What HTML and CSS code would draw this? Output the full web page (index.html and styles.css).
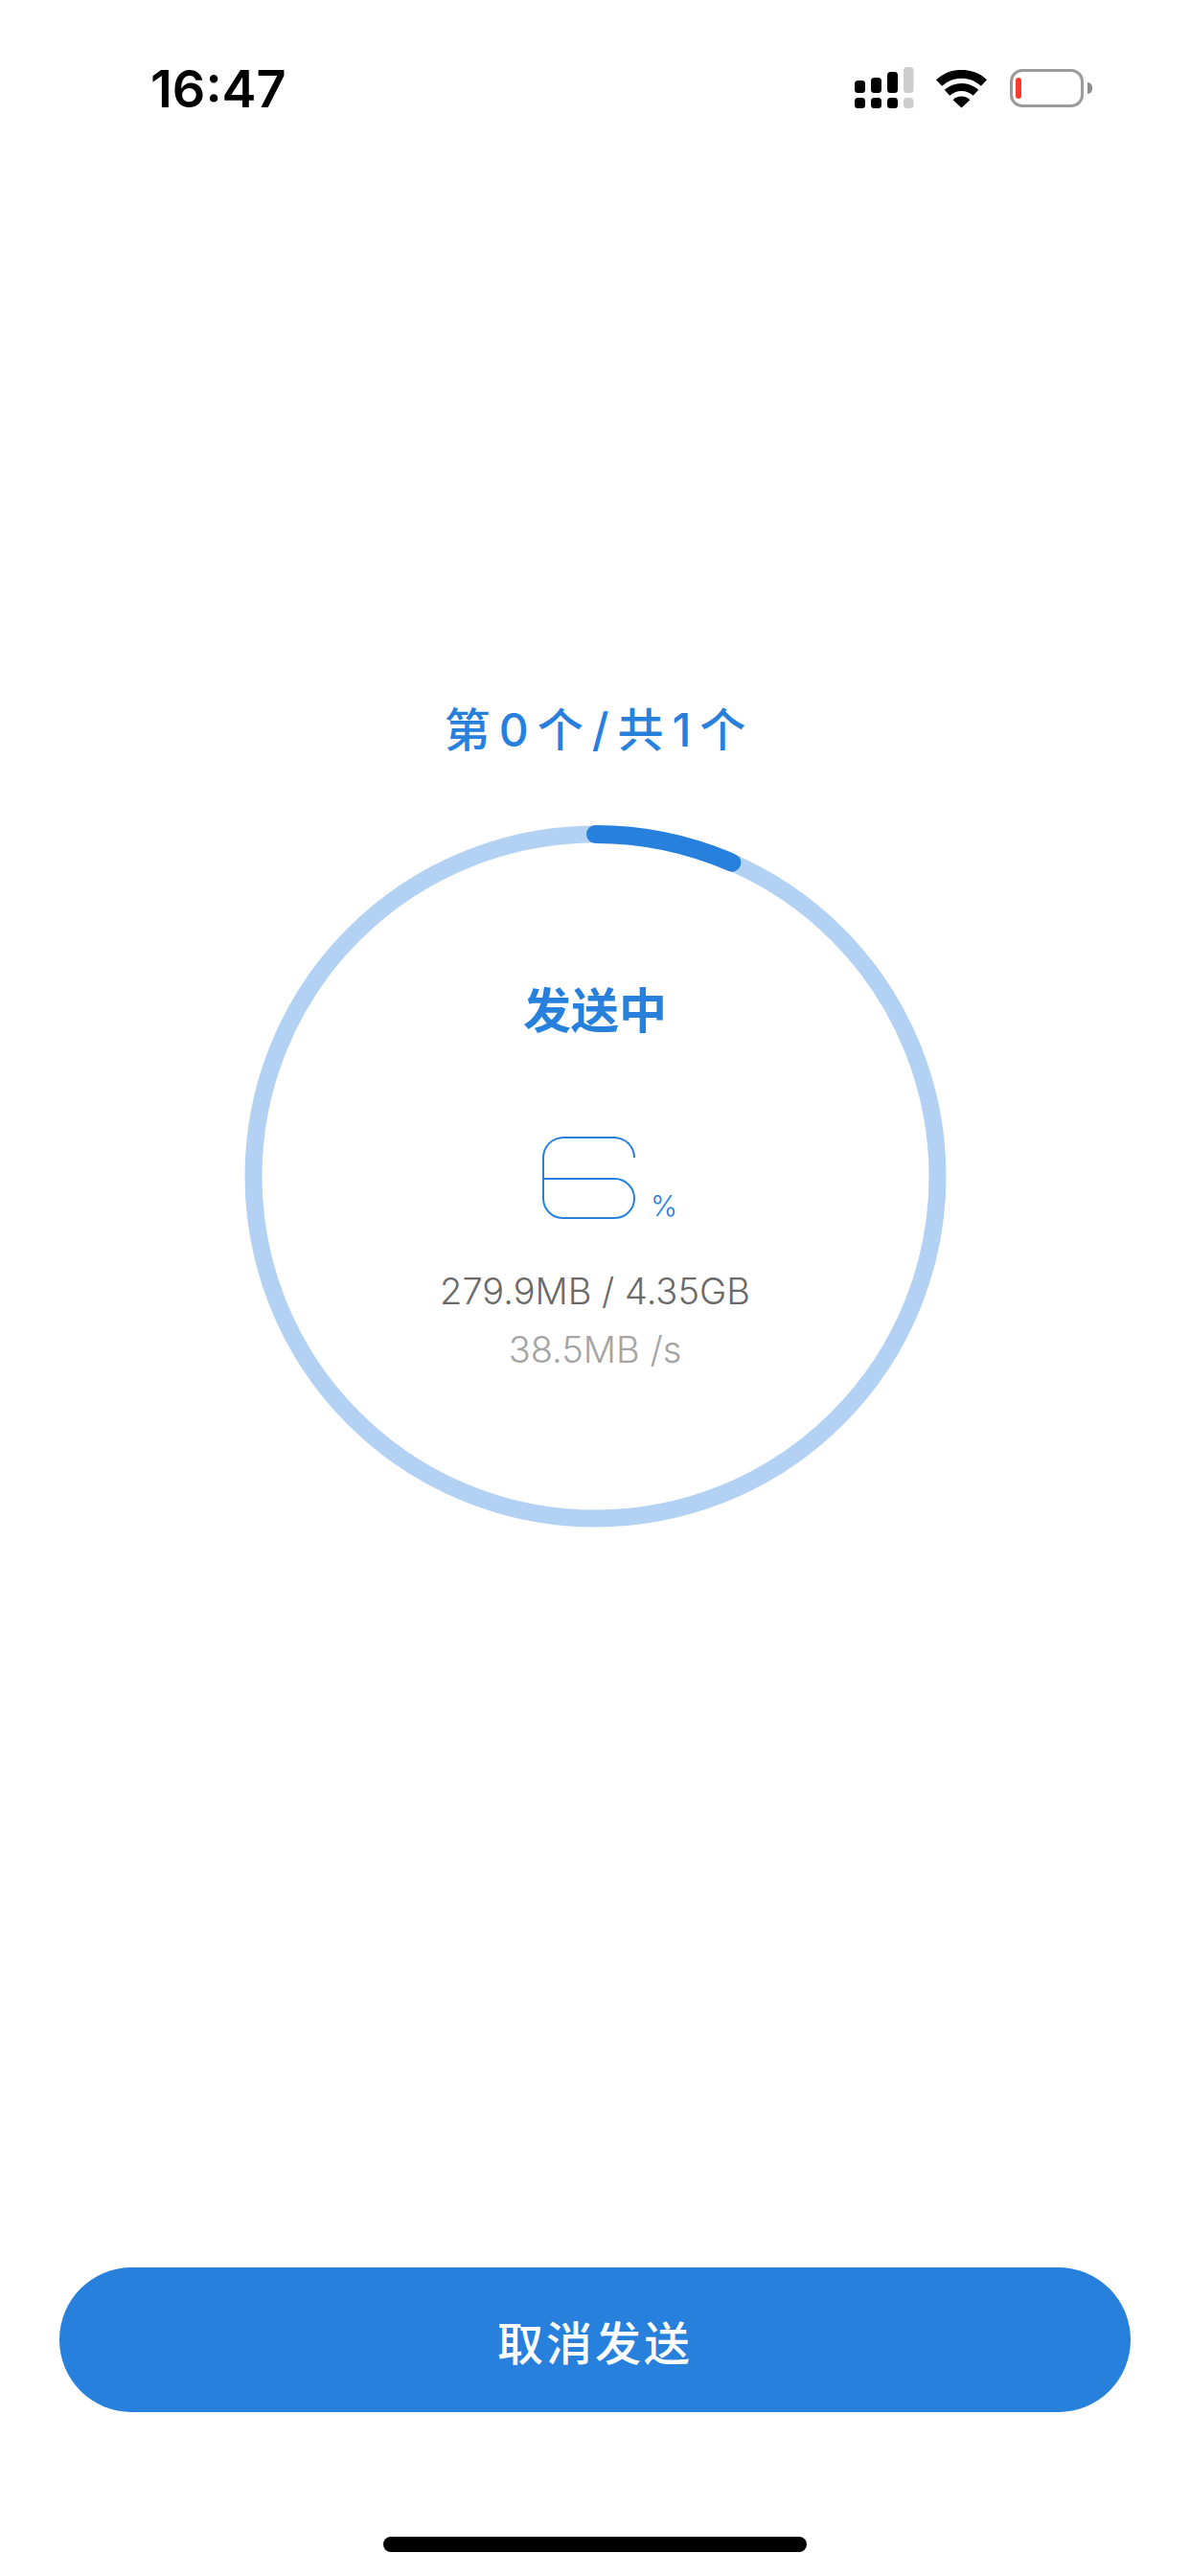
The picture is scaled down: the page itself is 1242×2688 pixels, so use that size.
FILE: index.html
```html
<!DOCTYPE html>
<html lang="zh-CN">
<head>
<meta charset="utf-8">
<title>发送中</title>
<link rel="stylesheet" href="styles.css">
</head>
<body>
<div class="screen">
  <header class="status">
    <span class="clock">16:47</span>
    <div class="status-icons">
      <svg class="signal" width="62" height="44" viewBox="0 0 62 44">
        <g fill="#000">
          <rect x="0" y="14" width="11" height="13" rx="3.5"/>
          <rect x="17" y="11" width="11" height="16" rx="3.5"/>
          <rect x="34" y="5" width="11" height="22" rx="3.5"/>
          <rect x="0" y="32" width="11" height="11" rx="3.5"/>
          <rect x="17" y="32" width="11" height="11" rx="3.5"/>
          <rect x="34" y="32" width="11" height="11" rx="3.5"/>
        </g>
        <g fill="#cdcdcd">
          <rect x="51" y="0" width="10.500" height="27" rx="3.500"/>
          <rect x="51" y="32" width="10.500" height="11" rx="3.500"/>
        </g>
      </svg>
      <svg class="wifi" width="53" height="40" viewBox="0 0 53 40">
        <g fill="none" stroke="#000">
          <path stroke-width="9" d="M3.100 13.500A34.500 34.500 0 0 1 49.900 13.500"/>
          <path stroke-width="8" d="M11.500 23.800A22 22 0 0 1 41.500 23.800"/>
        </g>
        <path fill="#000" d="M26.500 39.500L17.600 31.200A12.500 12.500 0 0 1 35.400 31.200Z"/>
      </svg>
      <div class="battery">
        <div class="battery-case"><span class="battery-level"></span></div>
        <span class="battery-nub"></span>
      </div>
    </div>
  </header>

  <main class="transfer">
    <h1 class="count">第0个/共1个</h1>
    <section class="ring">
      <svg class="ring-art" width="733" height="733" viewBox="0 0 733 733">
        <circle cx="366.500" cy="366.500" r="357" fill="none" stroke="#b3d2f3" stroke-width="18"/>
        <path d="M366.500 9.500A357 357 0 0 1 508.800 39.100" fill="none" stroke="#2780dc" stroke-width="19" stroke-linecap="round"/>
      </svg>
      <h2 class="state">发送中</h2>
      <div class="percent">
        <div class="numeral" role="img" aria-label="6">
          <span class="numeral-cap"></span>
          <span class="numeral-stem"></span>
          <span class="numeral-bowl"></span>
        </div>
        <span class="percent-sign">%</span>
      </div>
      <p class="sizes">279.9MB / 4.35GB</p>
      <p class="speed">38.5MB /s</p>
    </section>
  </main>

  <footer class="actions">
    <button class="cancel" type="button">取消发送</button>
    <span class="home-bar"></span>
  </footer>
</div>
</body>
</html>
```

FILE: styles.css
```css
* {
  box-sizing: border-box;
}

html,
body {
  margin: 0;
  padding: 0;
  background: #fff;
}

body {
  font-family: Inter, "Noto Sans CJK SC", sans-serif;
}

h1,
h2,
p {
  margin: 0;
  font-weight: 400;
}

.screen {
  width: 1242px;
  height: 2688px;
  display: flex;
  flex-direction: column;
  overflow: hidden;
}

/* status bar */
.status {
  height: 140px;
  padding: 71px 102px 0 157px;
  display: flex;
  justify-content: space-between;
  align-items: flex-start;
}

.clock {
  font-size: 54px;
  line-height: 44px;
  font-weight: 600;
  color: #000;
}

.status-icons {
  display: flex;
  align-items: flex-start;
  width: 248px;
  margin-top: -1px;
}

.signal {
  margin-right: 23px;
}

.wifi {
  margin: 3px 24px 0 0;
}

.battery {
  display: flex;
  align-items: center;
  margin-top: 2px;
}

.battery-case {
  width: 77px;
  height: 40px;
  border: 3px solid #9b9b9b;
  border-radius: 13px;
  padding: 6px 3px;
}

.battery-level {
  display: block;
  width: 6px;
  height: 22px;
  border-radius: 3px;
  background: #ff3b30;
}

.battery-nub {
  width: 5px;
  height: 12px;
  margin-left: 4px;
  border-radius: 0 6px 6px 0;
  background: #8e8e8e;
}

/* progress block */
.transfer {
  display: flex;
  flex-direction: column;
  align-items: center;
  padding-top: 592px;
  flex: 1;
}

.count {
  font-size: 48px;
  line-height: 60px;
  font-weight: 500;
  letter-spacing: 9px;
  margin-right: -9px;
  color: #2780dc;
  white-space: nowrap;
}

.ring {
  position: relative;
  width: 733px;
  height: 733px;
  margin-top: 69px;
  padding-top: 164px;
  display: flex;
  flex-direction: column;
  align-items: center;
}

.ring-art {
  position: absolute;
  left: 0;
  top: 0;
}

.state {
  position: relative;
  font-size: 50px;
  line-height: 60px;
  font-weight: 700;
  color: #2780dc;
}

.percent {
  display: flex;
  align-items: flex-end;
  gap: 16px;
  margin-top: 101px;
  padding-left: 31px;
}

.numeral {
  width: 97px;
  display: flex;
  flex-direction: column;
}

.numeral-cap {
  height: 22px;
  border: 2.500px solid #2780dc;
  border-bottom: 0;
  border-radius: 23px 23px 0 0;
}

.numeral-stem {
  height: 21px;
  border-left: 2.500px solid #2780dc;
}

.numeral-bowl {
  height: 43px;
  border: 2.500px solid #2780dc;
  border-radius: 0 24px 24px 24px;
}

.percent-sign {
  font-size: 30px;
  line-height: 28px;
  font-weight: 300;
  color: #2780dc;
}

.sizes {
  margin-top: 50px;
  font-size: 38px;
  line-height: 50px;
  font-weight: 300;
  color: #6a6a6a;
  white-space: nowrap;
}

.speed {
  margin-top: 11px;
  font-size: 38px;
  line-height: 50px;
  font-weight: 300;
  color: #a4a4a4;
  white-space: nowrap;
}

/* bottom action */
.actions {
  display: flex;
  flex-direction: column;
  align-items: center;
  padding-bottom: 25px;
}

.cancel {
  width: 1118px;
  height: 151px;
  padding: 0;
  border: 0;
  border-radius: 76px;
  background: #2780dc;
  color: #fff;
  font-family: inherit;
  font-size: 48px;
  font-weight: 500;
  letter-spacing: 3px;
}

.home-bar {
  width: 442px;
  height: 16px;
  margin-top: 130px;
  border-radius: 8px;
  background: #000;
}
```
